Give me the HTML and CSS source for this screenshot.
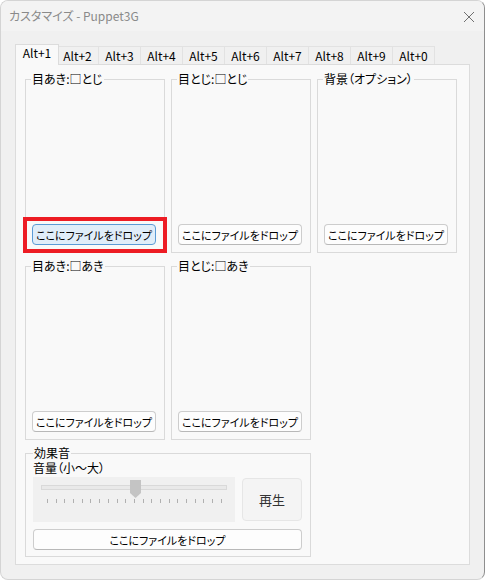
FILE: index.html
```html
<!DOCTYPE html>
<html lang="ja">
<head>
    <meta charset="UTF-8">
    <meta name="viewport" content="width=device-width, initial-scale=1.0">
    <title>カスタマイズ - Puppet3G</title>
    <link rel="stylesheet" href="styles.css">
</head>
<body>
    <div class="window">
        <div class="titlebar">
            <span class="title">カスタマイズ - Puppet3G</span>
            <svg class="close" width="12" height="12" viewBox="0 0 12 12">
                <path d="M1 1L11 11M11 1L1 11" stroke="#707070" stroke-width="1" fill="none"/>
            </svg>
        </div>

        <div class="content">
            <div class="tabs">
                <div class="tab active">Alt+1</div>
                <div class="tab">Alt+2</div>
                <div class="tab">Alt+3</div>
                <div class="tab">Alt+4</div>
                <div class="tab">Alt+5</div>
                <div class="tab">Alt+6</div>
                <div class="tab">Alt+7</div>
                <div class="tab">Alt+8</div>
                <div class="tab">Alt+9</div>
                <div class="tab">Alt+0</div>
            </div>

            <div class="panel">
                <div class="groups">
                    <fieldset class="group">
                        <legend>目あき:□とじ</legend>
                        <button class="drop focused">ここにファイルをドロップ</button>
                    </fieldset>
                    <fieldset class="group">
                        <legend>目とじ:□とじ</legend>
                        <button class="drop">ここにファイルをドロップ</button>
                    </fieldset>
                    <fieldset class="group">
                        <legend>背景（オプション）</legend>
                        <button class="drop">ここにファイルをドロップ</button>
                    </fieldset>
                    <fieldset class="group">
                        <legend>目あき:□あき</legend>
                        <button class="drop">ここにファイルをドロップ</button>
                    </fieldset>
                    <fieldset class="group">
                        <legend>目とじ:□あき</legend>
                        <button class="drop">ここにファイルをドロップ</button>
                    </fieldset>

                    <!-- 効果音 -->
                    <fieldset class="group sound">
                        <legend>効果音</legend>
                        <div class="volume-label">音量（小〜大）</div>
                        <div class="sound-row">
                            <div class="slider">
                                <div class="track">
                                    <svg class="thumb" width="11" height="18" viewBox="0 0 11 18">
                                        <path d="M0 0H11V13L5.5 18L0 13Z" fill="#c4c4c4"/>
                                    </svg>
                                </div>
                                <div class="ticks">
                                    <span></span><span></span><span></span><span></span><span></span>
                                    <span></span><span></span><span></span><span></span><span></span>
                                    <span></span><span></span><span></span><span></span><span></span>
                                    <span></span><span></span><span></span><span></span><span></span>
                                    <span></span>
                                </div>
                            </div>
                            <button class="play">再生</button>
                        </div>
                        <button class="drop wide">ここにファイルをドロップ</button>
                    </fieldset>
                </div>
            </div>
        </div>
    </div>
</body>
</html>
```

FILE: styles.css
```css
body {
    margin: 0;
    padding: 0;
    background-color: #ffffff;
    font-family: "Noto Sans CJK JP", "Noto Sans", sans-serif;
    font-feature-settings: "palt";
    font-size: 12px;
    color: #000;
}

.window {
    width: 485px;
    height: 580px;
    box-sizing: border-box;
    border: 1px solid #d4d4d4;
    border-right-color: #8e8e8e;
    border-radius: 8px;
    background-color: #f0f0f0;
    overflow: hidden;
}

.titlebar {
    height: 30px;
    display: flex;
    align-items: center;
    justify-content: space-between;
    padding: 0 9px 0 8px;
    background-color: #f3f3f3;
}

.title {
    color: #8a8a8a;
    font-size: 12px;
    line-height: 14px;
}

.close {
    margin-top: 1px;
}

.content {
    padding: 13px 0 0 14px;
}

/* タブ */
.tabs {
    display: flex;
    align-items: flex-end;
    height: 20px;
    position: relative;
    z-index: 1;
}

.tab {
    width: 42px;
    height: 18px;
    box-sizing: border-box;
    border-top: 1px solid #e2e2e2;
    border-right: 1px solid #e2e2e2;
    background-color: #f0f0f0;
    text-align: center;
    line-height: 17px;
}

.tab.active {
    width: 44px;
    height: 21px;
    margin-right: -2px;
    margin-bottom: -1px;
    border: 1px solid #dcdcdc;
    border-bottom: none;
    background-color: #f9f9f9;
    line-height: 16px;
    position: relative;
    z-index: 2;
}

.panel {
    width: 455px;
    box-sizing: border-box;
    border: 1px solid #dcdcdc;
    background-color: #f9f9f9;
    padding: 7px 11px 7px 9px;
}

.groups {
    display: grid;
    grid-template-columns: 140px 140px 140px;
    column-gap: 6px;
    row-gap: 6px;
}

.group {
    margin: 0;
    min-width: 0;
    height: 181px;
    box-sizing: border-box;
    border: 1px solid #dadada;
    padding: 0 5px 7px 5px;
    display: flex;
    flex-direction: column;
    justify-content: flex-end;
}

.group legend {
    padding: 0 1px;
    line-height: 14px;
    font-size: 12px;
}

/* ファイルドロップ用ボタン */
.drop {
    width: 124px;
    height: 21px;
    margin-left: 1px;
    padding: 0;
    border: 1px solid #cdcdcd;
    border-bottom-color: #b8b8b8;
    border-radius: 4px;
    background-color: #fdfdfd;
    font-family: inherit;
    font-feature-settings: "palt";
    font-size: 11px;
    color: #000;
    position: relative;
}

.drop.focused {
    border-color: #5b9bd5;
    background-color: #e0edf9;
}

/* 赤枠 */
.drop.focused::after {
    content: "";
    position: absolute;
    left: -10px;
    right: -12px;
    top: -8px;
    bottom: -9px;
    border: 4px solid #ed1c24;
}

.sound {
    grid-column: span 2;
    height: 111px;
    padding: 1px 8px 6px 7px;
    justify-content: flex-start;
}

.volume-label {
    line-height: 14px;
}

.sound-row {
    display: flex;
    gap: 7px;
    margin-top: 2px;
}

.slider {
    width: 202px;
    height: 45px;
    box-sizing: border-box;
    background-color: #f0f0f0;
    padding: 8px 8px 0 8px;
}

.track {
    height: 5px;
    box-sizing: border-box;
    border: 1px solid #d9d9d9;
    background-color: #e9e9e9;
    position: relative;
}

.thumb {
    position: absolute;
    left: 88px;
    top: -6px;
}

.ticks {
    display: flex;
    justify-content: space-between;
    margin: 9px 5px 0 6px;
}

.ticks span {
    width: 1px;
    height: 4px;
    background-color: #b0b0b0;
}

.play {
    width: 60px;
    height: 43px;
    margin-top: 1px;
    border: 1px solid #e6e6e6;
    border-radius: 4px;
    background-color: #f4f4f4;
    font-family: inherit;
    font-size: 13px;
    color: #333;
}

.drop.wide {
    width: 269px;
    margin: 7px 0 0 0;
}
```
